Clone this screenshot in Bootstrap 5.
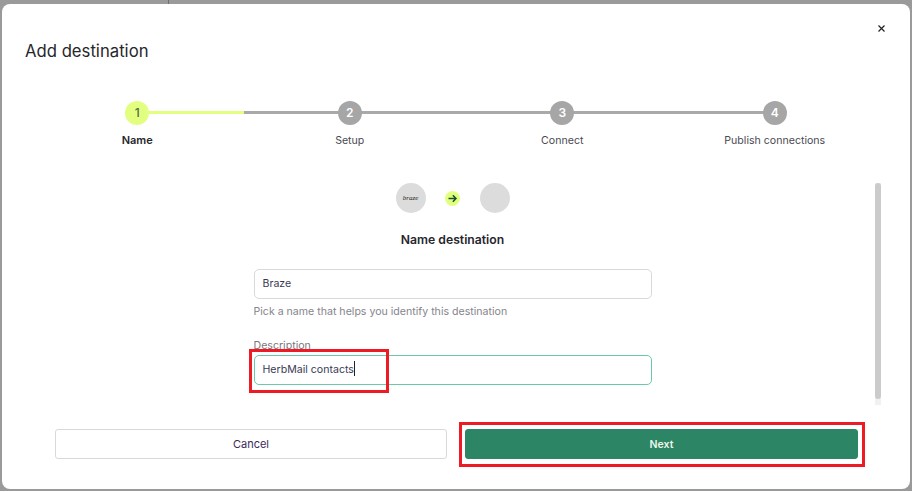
<!DOCTYPE html>
<html lang="en">
<head>
<meta charset="utf-8">
<title>Add destination</title>
<link rel="stylesheet" href="https://cdn.jsdelivr.net/npm/bootstrap@5.3.0/dist/css/bootstrap.min.css">
<style>
html,body{background:#fff;margin:0;height:492px;overflow:hidden;font-family:Inter,"Noto Sans",sans-serif;color:#2b2b33}
.shade{width:912px;height:491px;padding:4px 2px 2px 2px;position:relative;background:linear-gradient(#6f6f6f,#6f6f6f) 168px 0/1px 4px no-repeat,#9a9a9a}
.dialog{height:485px;background:#fff;border-radius:8px;position:relative;border:0;display:flex;flex-direction:column}
.dlg-head{height:97px;padding:37px 0 0 23px;position:relative;border:0;display:block}
.dlg-title{font-size:16.7px;line-height:20px;font-weight:400;margin:0;color:#26262c}
.closer{position:absolute;right:24px;top:20px;width:9px;height:9px;padding:0;background:none;border:0;display:flex}
.stepper{display:grid;grid-template-columns:repeat(4,212.5px);margin-left:29px;height:76px}
.stp{position:relative;display:flex;flex-direction:column;align-items:center}
.stp::before{content:"";position:absolute;left:50%;width:100%;top:10px;height:3px;background:#a9a9a9}
.stp:last-child::before{display:none}
.stp.on::after{content:"";position:absolute;left:50%;width:50%;top:10px;height:3px;background:#e3ff80}
.dot{width:24px;height:24px;border-radius:50%;background:#a6a6a6;color:#fff;font-size:12px;font-weight:600;display:flex;align-items:center;justify-content:center;position:relative;z-index:1}
.on .dot{background:#e3ff80;color:#4d6b45;font-weight:500}
.lbl{font-size:10.6px;line-height:14px;margin-top:9px;color:#4a4a52;white-space:nowrap}
.on .lbl{font-weight:600;color:#26262c;font-size:11px;margin-top:8px}
.pane{flex:1;position:relative;display:flex;flex-direction:column;align-items:center;padding-right:7px}
.logos{display:flex;align-items:center;gap:19px;height:30px;margin-top:6px}
.disc{width:30px;height:30px;border-radius:50%;background:#dcdcdc;display:flex;align-items:center;justify-content:center}
.brz{font-family:"Liberation Serif",serif;font-style:italic;font-size:7px;color:#222}
.go{width:15px;height:15px;border-radius:50%;background:#e3ff80;display:flex;align-items:center;justify-content:center;margin-right:1px}
.sub{font-size:12.2px;line-height:14px;font-weight:600;margin:20px 0 0;color:#26262c}
.fields{width:398px;margin-top:22px}
.fld{height:30px;font-size:10.6px;padding:0 8px 2px;border:1px solid #d9d9d9;border-radius:5px;color:#3a3a55;font-family:Inter,sans-serif;box-shadow:none}
.fld-teal{border-color:#6cc9a5}
.hint{font-size:10.6px;line-height:14px;margin-top:6px;color:#85858c}
.cap{font-size:10.6px;line-height:14px;margin:20px 0 0;color:#77777e;display:block}
.inwrap{position:relative;margin-top:2px}
.caret{position:absolute;left:100px;top:6px;width:1px;height:15px;background:#222}
.bar{position:absolute;left:873px;top:6px;width:6px;height:222px;background:#f1f1f1}
.thumb{width:6px;height:216px;background:#cbcbcb;border-radius:3px}
.foot{height:30px;margin:0 0 30px 53px;display:flex;gap:18px}
.foot .btn{height:30px;padding:1px 0 0;border-radius:3px}
.b-cancel{flex:0 0 392px;background:#fff;border:1px solid #d9d9d9;color:#3a2a5a;font-size:11px}
.b-next{flex:0 0 393px;background:#2c8565;border:1px solid #2c8565;color:#eef7ea;font-weight:600;font-size:10.5px}
.mark-a,.mark-b{position:absolute;border:3px solid #ed1c24;pointer-events:none}
.mark-a{left:249px;top:349px;width:140px;height:44px}
.mark-b{left:459px;top:422px;width:406px;height:45px}
</style>
</head>
<body>
<div class="shade">
  <div class="modal-content dialog">
    <div class="modal-header dlg-head">
      <h5 class="modal-title dlg-title">Add destination</h5>
      <button type="button" class="closer" aria-label="Close">
        <svg width="9" height="9" viewBox="0 0 9 9"><path d="M1.5 1.5l6 6M7.5 1.5l-6 6" stroke="#222" stroke-width="1.2" fill="none"/></svg>
      </button>
    </div>
    <div class="stepper">
      <div class="stp on"><span class="dot">1</span><span class="lbl">Name</span></div>
      <div class="stp"><span class="dot">2</span><span class="lbl">Setup</span></div>
      <div class="stp"><span class="dot">3</span><span class="lbl">Connect</span></div>
      <div class="stp"><span class="dot">4</span><span class="lbl">Publish connections</span></div>
    </div>
    <div class="pane">
      <div class="logos">
        <span class="disc"><span class="brz">braze</span></span>
        <span class="go"><svg width="11" height="11" viewBox="0 0 11 11"><path d="M1.5 5.5h7.5M5.8 2.3l3.2 3.2-3.2 3.2" stroke="#14532d" stroke-width="1.5" fill="none"/></svg></span>
        <span class="disc"></span>
      </div>
      <h6 class="sub">Name destination</h6>
      <div class="fields">
        <input class="form-control fld" value="Braze" aria-label="Name">
        <div class="hint">Pick a name that helps you identify this destination</div>
        <label class="cap">Description</label>
        <div class="inwrap">
          <input class="form-control fld fld-teal" value="HerbMail contacts" aria-label="Description">
          <span class="caret"></span>
        </div>
      </div>
      <div class="bar"><div class="thumb"></div></div>
    </div>
    <div class="foot">
      <button type="button" class="btn b-cancel">Cancel</button>
      <button type="button" class="btn b-next">Next</button>
    </div>
  </div>
  <div class="mark-a"></div>
  <div class="mark-b"></div>
</div>
<script src="https://cdn.jsdelivr.net/npm/bootstrap@5.3.0/dist/js/bootstrap.bundle.min.js"></script>
</body>
</html>
